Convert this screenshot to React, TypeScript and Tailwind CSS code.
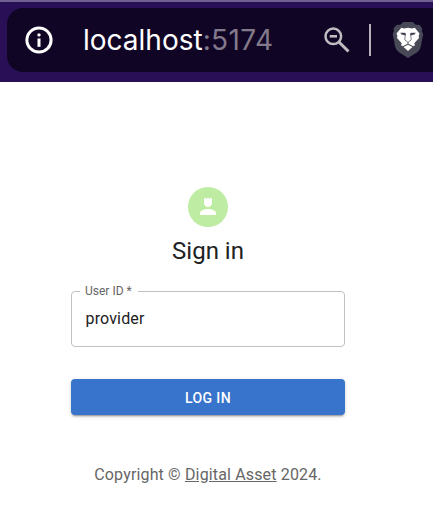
import React from "react";

function InfoIcon() {
  return (
    <svg className="ml-[17px] h-8 w-8 shrink-0" viewBox="0 0 32 32" fill="none">
      <circle cx="15" cy="16" r="12.1" stroke="#fff" strokeWidth="3" />
      <rect x="13.5" y="9.4" width="3" height="3" rx="0.8" fill="#fff" />
      <rect x="13.5" y="14.5" width="3" height="8.3" fill="#fff" />
    </svg>
  );
}

function ZoomOutIcon() {
  return (
    <svg className="h-8 w-8 shrink-0" viewBox="0 0 32 32" fill="none" stroke="#bfbdc0">
      <circle cx="11.3" cy="12.3" r="7.8" strokeWidth="2.5" />
      <path d="M7.7 12.3H15" strokeWidth="2.6" />
      <path d="M16.7 17.7L26.5 27.5" strokeWidth="3" />
    </svg>
  );
}

function LionIcon() {
  return (
    <svg className="h-9 w-8 shrink-0" viewBox="0 0 32 36">
      <path
        d="M11.2 0H20.8L23.6 2.8L27.5 2.9L30.3 6.6L29.7 8.7L31.2 12.3L28.7 24.7Q28 28.2 25.2 30.2L16 36L7 30.2Q4 28.2 3.2 24.7L.7 12.3L2 8.7L1.4 6.6L4.5 2.9L8.4 2.8Z"
        fill="#484957"
      />
      <path
        d="M9.3 5.8L12 6.4L16 5.7L20 6.4L22.8 5.8L27.5 11.6L26.6 14.2L27.2 15.8L22.3 21.2L23 23.2L21.2 24.2L16 21.4L10.8 24.2L9 23.2L9.7 21.2L4.8 15.8L5.5 14.2L4.5 11.6Z"
        fill="#fff"
      />
      <path d="M16 22.8L20.5 25.1L16 28.9L11.5 25.1Z" fill="#fff" />
      <path
        d="M8.2 10.7L12.8 10.8L14.2 11.7L13.4 13.6L9.4 12.4ZM23.8 10.7L19.2 10.8L17.8 11.7L18.6 13.6L22.6 12.4Z"
        fill="#484957"
      />
      <path
        d="M13.2 13L12.8 17.8L16 20.4L19.2 17.8L18.8 13M16 20V22"
        fill="none"
        stroke="#484957"
        strokeWidth="0.7"
      />
    </svg>
  );
}

function PersonIcon() {
  return (
    <svg className="h-6 w-6" viewBox="0 0 24 24" fill="#fff">
      <path d="M4 18v2h16v-2c0-2.66-5.33-4-8-4s-8 1.34-8 4zM8 4v4c0 2.21 1.79 4 4 4s4-1.79 4-4V4c0-.55-.45-1-1-1-.31 0-.61.15-.8.4L13.9 3.8l-1-.6c-.55-.27-1.25-.27-1.8 0l-1 .6-.3-.4C9.61 3.15 9.31 3 9 3c-.55 0-1 .45-1 1z" />
    </svg>
  );
}

export default function App() {
  return (
    <div className="h-[532px] w-[433px] overflow-hidden bg-white font-['Roboto',sans-serif] text-[#202122]">
      <header className="h-[82px] border-t-2 border-[#705f91] bg-[#290f55] pt-1.5 pl-[7px]">
        <div className="flex h-16 items-center rounded-l-[16px] bg-[#110526]">
          <InfoIcon />
          <div className="ml-[27px] w-[239px] whitespace-nowrap font-['Inter',sans-serif] text-[28px] leading-8 text-[#827a8b]">
            <span className="text-white">localhost</span>
            <span className="tracking-[0.4px]">:5174</span>
          </div>
          <ZoomOutIcon />
          <div className="ml-[15px] h-8 w-0.5 shrink-0 bg-[#b5b2b9]" />
          <div className="ml-[21px] shrink-0"><LionIcon /></div>
        </div>
      </header>
      <main className="ml-[71px] flex w-[274px] flex-col items-center pt-[105px]">
        <div className="flex h-10 w-10 items-center justify-center rounded-full bg-[#beeca3]">
          <PersonIcon />
        </div>
        <h1 className="mt-2 text-2xl leading-8">Sign in</h1>
        <fieldset className="mt-[18px] h-[62px] w-full rounded-[4px] border border-[#c1c1c1] px-2">
          <legend className="h-3 pr-[6px] pl-[5px] text-[12px] leading-3 text-[#666]">User ID *</legend>
          <input
            aria-label="User ID"
            defaultValue="provider"
            className="mt-[10px] block h-6 w-full bg-transparent px-[5.5px] text-base tracking-[0.15px] outline-none"
          />
        </fieldset>
        <button className="mt-8 h-9 w-full rounded-[4px] bg-[#3874cb] pt-px text-sm font-medium tracking-[0.4px] text-white shadow-[0_3px_1px_-2px_rgba(0,0,0,0.2),0_2px_2px_rgba(0,0,0,0.14),0_1px_5px_rgba(0,0,0,0.12)]">
          LOG IN
        </button>
        <p className="mt-12 whitespace-nowrap text-base leading-6 tracking-[0.15px] text-[#666]">
          Copyright © <a href="#" className="underline">Digital Asset</a> 2024.
        </p>
      </main>
    </div>
  );
}
